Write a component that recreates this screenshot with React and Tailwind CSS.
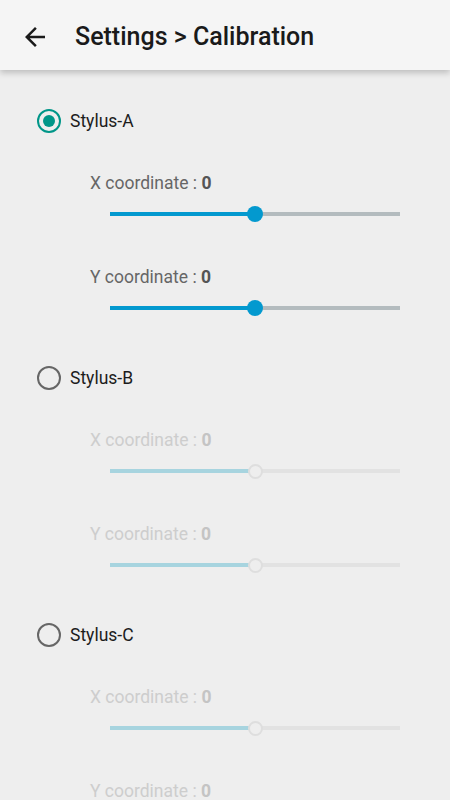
import React from "react";

function Radio({ checked }) {
    return (
        <span
            className={
                "w-6 h-6 rounded-full border-2 flex items-center justify-center " +
                (checked ? "border-[#009688]" : "border-[#666666]")
            }
        >
            {checked && <span className="w-3 h-3 rounded-full bg-[#009688]" />}
        </span>
    );
}

function Slider({ enabled }) {
    return (
        <div className="ml-[110px] w-[290px] h-5 flex items-center">
            <div className={"h-1 w-1/2 " + (enabled ? "bg-[#0399cf]" : "bg-[#a7d4df]")} />
            {enabled ? (
                <div className="w-4 h-4 -mx-2 rounded-full bg-[#0399cf] relative" />
            ) : (
                <div className="w-[15px] h-[15px] -mx-[7px] rounded-full border-2 border-[#dedede] bg-[#eeeeee] relative" />
            )}
            <div className={"h-1 flex-1 " + (enabled ? "bg-[#b3bbbe]" : "bg-[#e2e2e2]")} />
        </div>
    );
}

function Coord({ axis, enabled, first }) {
    return (
        <div className={first ? "mt-[36px]" : "mt-[43px]"}>
            <p
                className={
                    "ml-[90px] h-5 leading-5 text-[17.5px] " +
                    (enabled ? "text-[#666666]" : "text-[#cdcdcd]")
                }
            >
                {axis} coordinate :{" "}
                <span className={"font-bold " + (enabled ? "text-[#555555]" : "text-[#c4c4c4]")}>0</span>
            </p>
            <div className={first ? "mt-[11px]" : "mt-[11px]"}>
                <Slider enabled={enabled} />
            </div>
        </div>
    );
}

function Stylus({ name, checked }) {
    return (
        <section className="pb-[44px]">
            <div className="h-8 flex items-center gap-[9px] pl-[37px]">
                <Radio checked={checked} />
                <span className="text-[17.5px] text-[#1c1c1c]">{name}</span>
            </div>
            <Coord axis="X" enabled={checked} first />
            <Coord axis="Y" enabled={checked} />
        </section>
    );
}

export default function App() {
    return (
        <div className="w-[450px] h-[800px] overflow-hidden bg-[#eeeeee] font-['Roboto',sans-serif]">
            <header className="h-[70px] pt-[3px] bg-[#f5f5f5] flex items-center shadow-[0_3px_6px_rgba(0,0,0,0.2)] relative z-10">
                <svg width="30" height="30" viewBox="0 0 24 24" className="ml-5 text-[#1a1a1a]" fill="currentColor">
                    <path d="M20 11H7.83l5.59-5.59L12 4l-8 8 8 8 1.41-1.41L7.83 13H20v-2z" />
                </svg>
                <h1 className="ml-[25px] text-[25px] font-medium text-[#1a1a1a]">Settings &gt; Calibration</h1>
            </header>
            <main className="pt-[35px]">
                <Stylus name="Stylus-A" checked />
                <Stylus name="Stylus-B" />
                <Stylus name="Stylus-C" />
            </main>
        </div>
    );
}
